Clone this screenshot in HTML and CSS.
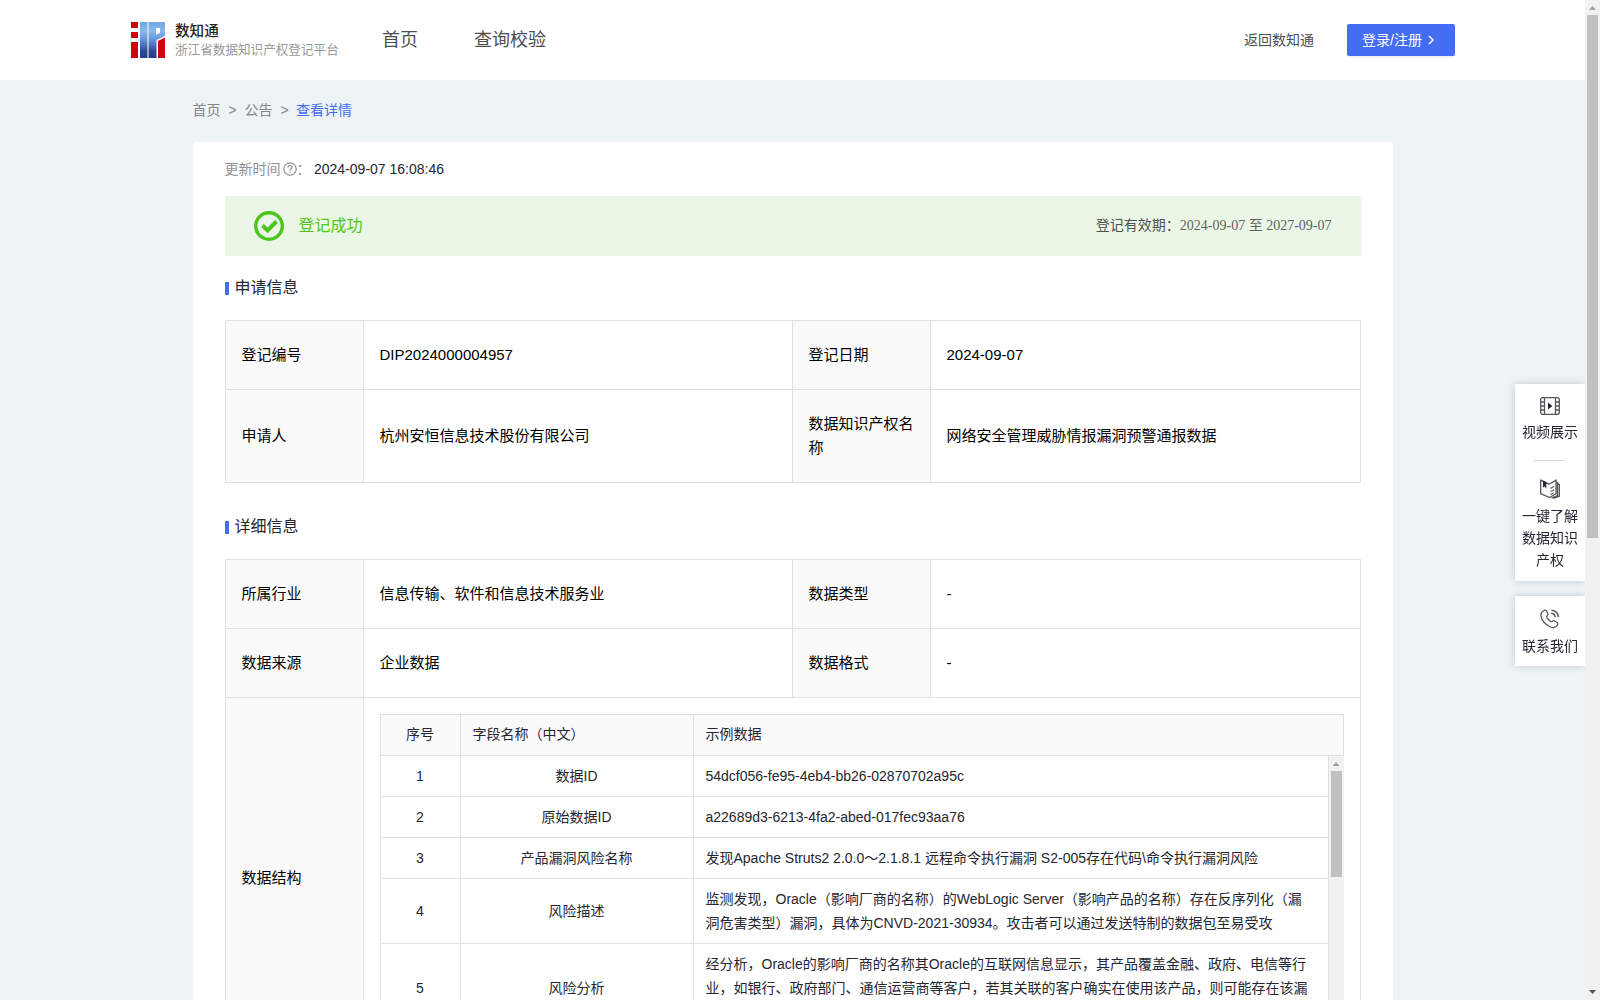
FILE: index.html
```html
<!DOCTYPE html>
<html lang="zh-CN">
<head>
	<meta charset="UTF-8">
	<title>数知通 - 查看详情</title>
	<link rel="stylesheet" href="styles.css">
</head>
<body>
	<div class="page">
		<div class="header">
			<div class="logo">
				<svg width="34" height="36" viewBox="0 0 34 36">
					<defs>
						<linearGradient id="blue" x1="0" y1="0" x2="0" y2="1">
							<stop offset="0" stop-color="#6fa8e2"/>
							<stop offset="0.25" stop-color="#8ab8ea"/>
							<stop offset="0.5" stop-color="#6393d4"/>
							<stop offset="0.8" stop-color="#2d4a94"/>
							<stop offset="1" stop-color="#253b84"/>
						</linearGradient>
					</defs>
					<path fill="#d0020a" d="M0 0h7v6H0zM0 10h7v6H0zM0 20h7v16H0zM27 19l7-3.500V36h-7z"/>
					<path fill="url(#blue)" fill-rule="evenodd" d="M9 0h7.500v36H9zM17.500 0H34v14l-8.500 4v18h-8zM25 6v7l4-2.500V6z"/>
				</svg>
				<div class="logo-text">
					<b>数知通</b>
					<span>浙江省数据知识产权登记平台</span>
				</div>
			</div>
			<div class="nav">
				<a>首页</a>
				<a>查询校验</a>
			</div>
			<a class="back">返回数知通</a>
			<a class="login">登录/注册
				<svg width="6" height="10" viewBox="0 0 6 10"><path d="M1 1l4 4-4 4" fill="none" stroke="#fff" stroke-width="1.5"/></svg>
			</a>
		</div>

		<div class="crumb">
			<span>首页</span><i>&gt;</i><span>公告</span><i>&gt;</i><span class="on">查看详情</span>
		</div>

		<div class="main">
			<div class="update">
				<span>更新时间</span>
				<svg width="14" height="14" viewBox="0 0 14 14" fill="none" stroke="#8f9094" stroke-width="1.2">
					<circle cx="7" cy="7" r="6.2"/>
					<path d="M5 5.6c0-2.6 4-2.6 4 0C9 7 7 6.900 7 8.500M7 9.600v1.200"/>
				</svg>
				<span class="colon">：</span>
				<em>2024-09-07 16:08:46</em>
			</div>
			<div class="state">
				<svg width="30" height="30" viewBox="0 0 30 30" fill="none" stroke="#4cc51c">
					<circle cx="15" cy="15" r="13.300" stroke-width="3.400"/>
					<path d="M8.500 14.500l5 5 9-9" stroke-width="4"/>
				</svg>
				<span class="ok">登记成功</span>
				<span class="valid">登记有效期：<em>2024-09-07 至 2027-09-07</em></span>
			</div>

			<h3>申请信息</h3>
			<table class="info">
				<tr>
					<th>登记编号</th><td class="wide">DIP2024000004957</td>
					<th>登记日期</th><td>2024-09-07</td>
				</tr>
				<tr class="tall">
					<th>申请人</th><td>杭州安恒信息技术股份有限公司</td>
					<th>数据知识产权名称</th><td>网络安全管理威胁情报漏洞预警通报数据</td>
				</tr>
			</table>

			<h3>详细信息</h3>
			<table class="info">
				<tr>
					<th>所属行业</th><td class="wide">信息传输、软件和信息技术服务业</td>
					<th>数据类型</th><td>-</td>
				</tr>
				<tr>
					<th>数据来源</th><td>企业数据</td>
					<th>数据格式</th><td>-</td>
				</tr>
				<tr class="struct">
					<th>数据结构</th>
					<td colspan="3">
						<div class="grid-head">
							<div class="g1">序号</div>
							<div class="g2">字段名称（中文）</div>
							<div class="g3">示例数据</div>
						</div>
						<div class="grid-body">
							<div class="rows">
								<div class="row">
									<div class="g1">1</div><div class="g2">数据ID</div>
									<div class="g3">54dcf056-fe95-4eb4-bb26-02870702a95c</div>
								</div>
								<div class="row">
									<div class="g1">2</div><div class="g2">原始数据ID</div>
									<div class="g3">a22689d3-6213-4fa2-abed-017fec93aa76</div>
								</div>
								<div class="row">
									<div class="g1">3</div><div class="g2">产品漏洞风险名称</div>
									<div class="g3">发现Apache Struts2 2.0.0～2.1.8.1 远程命令执行漏洞 S2-005存在代码\命令执行漏洞风险</div>
								</div>
								<div class="row">
									<div class="g1">4</div><div class="g2">风险描述</div>
									<div class="g3">监测发现，Oracle（影响厂商的名称）的WebLogic Server（影响产品的名称）存在反序列化（漏<br>洞危害类型）漏洞，具体为CNVD-2021-30934。攻击者可以通过发送特制的数据包至易受攻</div>
								</div>
								<div class="row last">
									<div class="g1">5</div><div class="g2">风险分析</div>
									<div class="g3">经分析，Oracle的影响厂商的名称其Oracle的互联网信息显示，其产品覆盖金融、政府、电信等行<br>业，如银行、政府部门、通信运营商等客户，若其关联的客户确实在使用该产品，则可能存在该漏</div>
								</div>
							</div>
							<div class="bar">
								<i class="up"></i>
								<div class="thumb"></div>
							</div>
						</div>
					</td>
				</tr>
			</table>
		</div>
	</div>

	<div class="bar page-bar">
		<i class="up"></i>
		<div class="thumb"></div>
		<i class="down"></i>
	</div>

	<div class="side">
		<div class="side-box">
			<svg width="20" height="18" viewBox="0 0 20 18" fill="none" stroke="#55565c" stroke-width="1.300">
				<rect x="0.700" y="0.700" width="18.600" height="16.600" rx="2"/>
				<path d="M4.500 1v16M15.500 1v16M1 5h3.500M1 9h3.500M1 13h3.500M15.500 5H19M15.500 9H19M15.500 13H19"/>
				<path d="M8 5.500v7l4.400-3.500z" fill="#252631" stroke="none"/>
			</svg>
			<p>视频展示</p>
			<hr>
			<svg width="20" height="20" viewBox="0 0 20 20" fill="none" stroke="#55565c" stroke-width="1.300">
				<path d="M.7 1.200L9 5.200l7-4v13.500l-6.500 3.800L.7 14.500zM16 3l1.500.5v13l-6 2.500M17.500 5l1.800.5v11.700L13 19.300"/>
				<path d="M10.500 9.500L14 7.500M10.500 12.500l3.500-1.500M10.500 15.500l3-1.500"/>
				<path d="M3 1.500l3.300 1.700v6.300L4.700 7.500 3 8.500z" fill="#252631" stroke="none"/>
			</svg>
			<p>一键了解<br>数据知识<br>产权</p>
		</div>
		<div class="side-box">
			<svg width="20" height="20" viewBox="0 0 20 20" fill="none" stroke="#55565c" stroke-width="1.200">
				<path d="M3.500 1.800C5 .6 6 1 6.700 2.200l1.200 2.300c.6 1.200-.2 1.800-1.200 2.700-.8.800 3.800 6.200 5 5.500 1-.8 1.700-1.500 2.800-.8l2.500 1.600c1.200.8 1 1.800.2 2.900-1.500 2-4 3-7.200 1.300C5.500 15.500 2 11.500 1 7.500.5 5 1.500 3.200 3.500 1.800z"/>
				<path d="M11 4.300c2.500.2 4 1.800 4.200 4M11.500 1.200c4 .4 6.600 3 7 7" stroke-width="1.600"/>
			</svg>
			<p>联系我们</p>
		</div>
	</div>
</body>
</html>
```
FILE: styles.css
```css
*{margin:0; padding:0; box-sizing:border-box;}
i,em{font-style:normal;}
svg{display:block; flex:none;}
body{
	display:flex;
	height:1000px;
	overflow:hidden;
	background:#eef3f6;
	color:#252631;
	font:14px/24px "Liberation Sans", Arial, "Noto Sans CJK SC", sans-serif;
}
.page{
	width:1585px;
	height:1000px;
	overflow:hidden;
}
.header{
	display:flex;
	align-items:center;
	height:80px;
	padding:0 130px 0 131px;
	background:#fff;
	color:#4d4d4f;
}
.logo{
	display:flex;
	width:251px;
	gap:10px;
}
.logo-text b{
	display:block;
	line-height:18px;
	font-size:14.6px;
	color:#222;
	font-weight:500;
}
.logo-text span{
	display:block;
	line-height:21px;
	font-size:12.6px;
	color:#999;
	white-space:nowrap;
}
.logo-text{height:36px;}
.nav{
	display:flex;
	gap:56px;
	font-size:18px;
	flex:1;
}
.back{padding-bottom:1px;}
.login{
	display:flex;
	align-items:center;
	gap:6px;
	width:108px;
	height:32px;
	margin-left:33px;
	padding:0 0 1px 15px;
	border-radius:2px;
	background:#446df6;
	color:#fff;
	box-shadow:0 2px 0 rgba(0,0,0,.045);
}
.crumb{
	display:flex;
	height:62px;
	padding:18px 0 0 192.5px;
	color:#838588;
}
.crumb i{
	width:24px;
	text-align:center;
}
.crumb .on{
	margin-left:-.5px;
	color:#446df6;
}
.main{
	width:1200px;
	height:900px;
	margin-left:192.5px;
	padding:0 32px;
	border-radius:4px;
	background:#fff;
}
.update{
	display:flex;
	align-items:center;
	height:54px;
	color:#909195;
}
.update svg{margin-left:2px;}
.update .colon{width:17.5px;}
.update em{color:#252631;}
.state{
	display:flex;
	align-items:center;
	height:60px;
	padding:0 29px;
	background:#ebf7e6;
}
.state .ok{
	margin-left:15px;
	font-size:16px;
	color:#52c41a;
}
.state .valid{
	margin-left:auto;
	padding-bottom:2px;
	color:#4f524f;
}
.valid em{font-family:"Liberation Serif", "Noto Sans CJK SC", serif; color:#606360;}
.main h3{
	display:flex;
	align-items:center;
	height:64px;
	font-size:16px;
	font-weight:normal;
}
.main h3:before{
	content:"";
	width:4px;
	height:13px;
	margin:0 6px 0 0;
	background:#446df6;
}
.main .info + h3{height:76px; padding-top:12px;}
.info{
	width:1136px;
	table-layout:fixed;
	border-collapse:collapse;
	font-size:15px;
	color:#000;
}
.info th,.info td{
	height:69px;
	padding:0 15px 0 16px;
	border:1px solid #e1e1e1;
	text-align:left;
	font-weight:normal;
}
.info th{
	width:138px;
	background:#fafafa;
}
.info .wide{width:429px;}
.info .tall th,.info .tall td{height:93px;}
.info .struct th,.info .struct td{height:361px;}
.info .struct td{
	padding:16px 16px 0;
	vertical-align:top;
}
.grid-head,.row{
	display:flex;
}
.grid-head{
	height:42px;
	border:1px solid #e1e1e1;
	background:#fafafa;
	font-size:14px;
	line-height:39px;
	color:#252631;
}
.g1{
	width:79px;
	text-align:center;
}
.g2{
	width:234px;
	padding:0 12px;
	border:solid #e1e1e1;
	border-width:0 1px;
}
.g3{
	flex:1;
	padding:0 12px;
}
.grid-body{
	display:flex;
	height:300px;
	overflow:hidden;
	font-size:14px;
	color:#252631;
}
.rows{
	width:949px;
	border:solid #e1e1e1;
	border-width:0 1px;
}
.row{border-bottom:1px solid #e1e1e1;}
.row .g1,.row .g2{
	display:flex;
	align-items:center;
	justify-content:center;
}
.row .g3{
	padding:8px 0 8px 12px;
	white-space:nowrap;
}
.row.last{height:89px;}
.bar{
	width:15px;
	background:#f1f1f1;
}
.bar i{
	display:block;
	width:7px;
	height:4px;
	margin:6px 0 0 4px;
	background:#a3a3a3;
	clip-path:polygon(50% 0,100% 100%,0 100%);
}
.bar .thumb{
	width:11px;
	height:106px;
	margin:5px 0 0 2px;
	background:#c1c1c1;
}
.page-bar .thumb{height:523px;}
.page-bar i.down{
	margin-top:452px;
	background:#505050;
	clip-path:polygon(0 0,100% 0,50% 100%);
}
/* 右侧悬浮栏 */
.side{
	position:fixed;
	right:15px;
	top:384px;
	width:70px;
	clip-path:inset(-12px 0 -12px -12px);
}
.side-box{
	display:flex;
	flex-direction:column;
	align-items:center;
	margin-bottom:15px;
	padding:13px 0 10px;
	background:#fff;
	box-shadow:0 0 8px rgba(0,0,0,.18);
	line-height:22px;
	text-align:center;
}
.side-box p{margin-top:6px;}
.side-box:last-child{padding-bottom:9px;}
.side-box hr{
	width:32px;
	margin:17px 0 18px;
	border:0;
	border-top:1px solid #dcdcdc;
}
```
